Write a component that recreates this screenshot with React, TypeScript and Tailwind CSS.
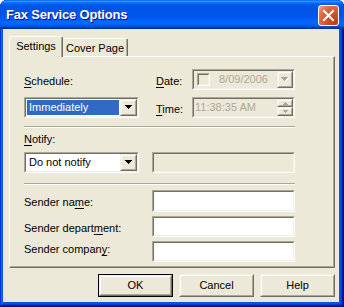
import React from "react";

type BoxProps = { className?: string; inner?: string; children?: React.ReactNode };

const Sunken = ({ className = "", inner = "", children }: BoxProps) => (
  <div className={`border border-t-[#aca899] border-l-[#aca899] border-b-white border-r-white ${className}`}>
    <div className={`h-full w-full border border-t-[#716f64] border-l-[#716f64] border-b-[#f1efe2] border-r-[#f1efe2] ${inner}`}>
      {children}
    </div>
  </div>
);

const Raised = ({ className = "", inner = "", children }: BoxProps) => (
  <div className={`border border-t-[#f1efe2] border-l-[#f1efe2] border-b-[#716f64] border-r-[#716f64] bg-[#ece9d8] ${className}`}>
    <div className={`h-full w-full border border-t-white border-l-white border-b-[#aca899] border-r-[#aca899] flex items-center justify-center ${inner}`}>
      {children}
    </div>
  </div>
);

const Arrow = ({ disabled }: { disabled?: boolean }) => (
  <svg width="8" height="5" viewBox="0 0 8 5" shapeRendering="crispEdges">
    {disabled && <path d="M1 1h7v1H1zM2 2h5v1H2zM3 3h3v1H3zM4 4h1v1H4z" fill="#ffffff" />}
    <path d="M0 0h7v1H0zM1 1h5v1H1zM2 2h3v1H2zM3 3h1v1H3z" fill={disabled ? "#aca899" : "#000000"} />
  </svg>
);

const SpinArrow = ({ up }: { up?: boolean }) => (
  <svg width="5" height="3" viewBox="0 0 5 3" shapeRendering="crispEdges">
    <path d={up ? "M2 0h1v1H2zM1 1h3v1H1zM0 2h5v1H0z" : "M0 0h5v1H0zM1 1h3v1H1zM2 2h1v1H2z"} fill="#aca899" />
  </svg>
);

const Combo = ({ text, selected }: { text: string; selected?: boolean }) => (
  <Sunken className="w-[115px] h-[21px]" inner="bg-white flex">
    <div className="flex-1 p-[1px]">
      <div className={`h-[15px] leading-[15px] pl-[2px] ${selected ? "bg-[#316ac5] text-white" : "text-black"}`}>{text}</div>
    </div>
    <Raised className="w-[17px] h-[17px]">
      <Arrow />
    </Raised>
  </Sunken>
);

const U = ({ children }: { children: React.ReactNode }) => <span className="underline underline-offset-[2px]">{children}</span>;

export default function App() {
  return (
    <div className="w-[344px] h-[307px] flex flex-col bg-[#0855dd] rounded-t-[7px] overflow-hidden font-['Liberation_Sans',Arial,sans-serif] text-[11px] leading-[13px] text-black shadow-[inset_-1px_-1px_#00138c,inset_1px_1px_#0831d9,inset_-2px_-2px_#001ea0,inset_2px_2px_#166aee,inset_-3px_-3px_#003bda,inset_3px_3px_#0855dd]">
      {/* Title bar */}
      <div className="h-[29px] flex items-start justify-between pl-[6px] pr-[5px] bg-[linear-gradient(to_bottom,#0058ee_0%,#3593ff_4%,#288eff_6%,#127dff_8%,#036ffc_10%,#0262ee_14%,#0057e5_20%,#0054e3_24%,#0055eb_56%,#005bf5_66%,#026afe_76%,#0062ef_86%,#0052d6_92%,#0040ab_94%,#003092_100%)]">
        <div className="pt-[7px] text-[13px] leading-[16px] font-bold text-white tracking-[-0.2px] [text-shadow:1px_1px_#0a1883]">
          Fax Service Options
        </div>
        <div className="mt-[5px] w-[21px] h-[21px] rounded-[3px] border border-white bg-[radial-gradient(circle_at_85%_85%,#c13c15_0%,#d9532c_45%,#e2704c_75%,#f3b39d_100%)] flex items-center justify-center">
          <svg width="19" height="19" viewBox="0 0 19 19">
            <path d="M5 5L14 14M14 5L5 14" stroke="#ffffff" strokeWidth="2" strokeLinecap="square" />
          </svg>
        </div>
      </div>

      {/* Body */}
      <div className="flex-1 flex pl-[3px] pr-[5px] pb-[5px]">
        <div className="flex-1 bg-[#ece9d8] flex flex-col pt-[7px] pl-[6px] pr-[4px]">
          {/* Tabs */}
          <div className="h-[20px] flex items-end relative z-10">
            <div className="w-[54px] h-[21px] mb-[-1px] bg-[#ece9d8] border-l border-t border-r border-l-white border-t-white border-r-[#716f64] rounded-t-[2px] shadow-[inset_-1px_0_#aca899] pt-[3px] text-center">
              Settings
            </div>
            <div className="w-[65px] h-[18px] bg-[#ece9d8] border-t border-r border-t-white border-r-[#716f64] rounded-tr-[2px] shadow-[inset_-1px_0_#aca899] pt-[3px] text-center">
              Cover Page
            </div>
          </div>

          {/* Panel */}
          <div className="h-[212px] border border-t-white border-l-white border-b-[#716f64] border-r-[#716f64] shadow-[inset_-1px_-1px_#aca899] pt-[12px] pl-[14px] flex flex-col">
            {/* Schedule / Date / Time */}
            <div className="flex h-[49px]">
              <div className="w-[115px] flex flex-col">
                <div className="h-[21px] pt-[6px]">
                  <U>S</U>chedule:
                </div>
                <div className="mt-[7px]">
                  <Combo text="Immediately" selected />
                </div>
              </div>
              <div className="ml-[17px] flex flex-col gap-[7px]">
                <div className="flex h-[21px]">
                  <div className="w-[36px] pt-[6px]">
                    <U>D</U>ate:
                  </div>
                  <Sunken className="w-[103px] h-[21px]" inner="bg-[#ece9d8] flex items-center">
                    <Sunken className="ml-[3px] w-[13px] h-[13px]" inner="bg-[#ece9d8]" />
                    <div className="ml-[9px] text-[#aca899]">8/09/2006</div>
                    <Raised className="ml-auto w-[16px] h-[17px]">
                      <Arrow disabled />
                    </Raised>
                  </Sunken>
                </div>
                <div className="flex h-[21px]">
                  <div className="w-[36px] pt-[6px]">
                    <U>T</U>ime:
                  </div>
                  <Sunken className="w-[103px] h-[21px]" inner="bg-[#ece9d8] flex items-center">
                    <div className="pl-[1px] text-[#aca899]">11:38:35 AM</div>
                    <div className="ml-auto w-[16px] h-[17px] flex flex-col">
                      <Raised className="h-[8px]">
                        <SpinArrow up />
                      </Raised>
                      <Raised className="h-[9px]">
                        <SpinArrow />
                      </Raised>
                    </div>
                  </Sunken>
                </div>
              </div>
            </div>

            <div className="mt-[8px] w-[271px] h-[2px] border-t border-b border-t-[#aca899] border-b-white" />

            <div className="mt-[5px] h-[13px]">
              <U>N</U>otify:
            </div>

            <div className="mt-[6px] flex">
              <Combo text="Do not notify" />
              <Sunken className="ml-[13px] w-[143px] h-[21px]" inner="bg-[#ece9d8]" />
            </div>

            <div className="mt-[10px] w-[271px] h-[2px] border-t border-b border-t-[#aca899] border-b-white" />

            <div className="mt-[5px] flex h-[22px]">
              <div className="w-[128px] pt-[6px]">
                Sender na<U>m</U>e:
              </div>
              <Sunken className="w-[143px] h-[22px]" inner="bg-white" />
            </div>
            <div className="mt-[4px] flex h-[21px]">
              <div className="w-[128px] pt-[6px]">
                Sender depart<U>m</U>ent:
              </div>
              <Sunken className="w-[143px] h-[21px]" inner="bg-white" />
            </div>
            <div className="mt-[4px] flex h-[21px]">
              <div className="w-[128px] pt-[2px]">
                Sender compan<U>y</U>:
              </div>
              <Sunken className="w-[143px] h-[21px]" inner="bg-white" />
            </div>
          </div>

          {/* Buttons */}
          <div className="mt-[6px] h-[23px] flex justify-end gap-[6px]">
            <div className="w-[75px] h-[23px] border border-black">
              <Raised className="w-full h-full">OK</Raised>
            </div>
            <Raised className="w-[75px] h-[23px]">Cancel</Raised>
            <Raised className="w-[75px] h-[23px]">Help</Raised>
          </div>
        </div>
      </div>
    </div>
  );
}
